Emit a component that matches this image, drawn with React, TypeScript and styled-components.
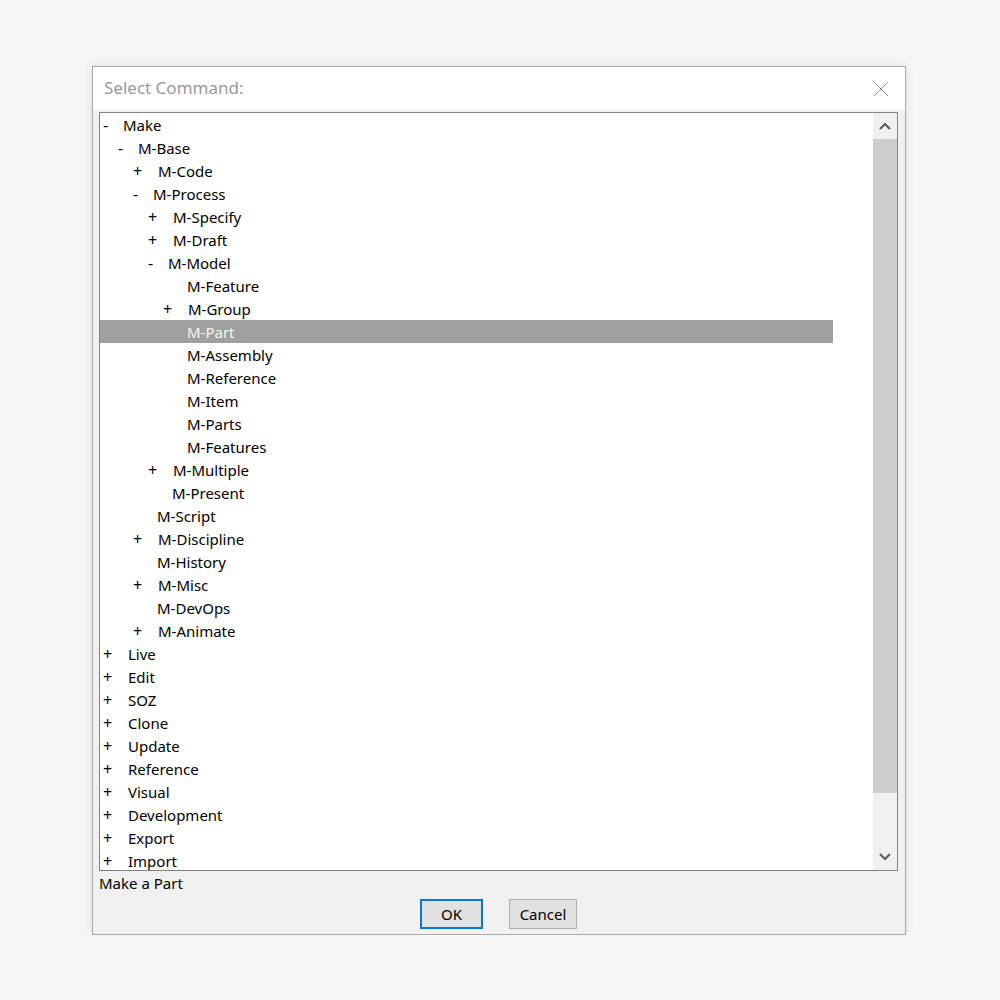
import React from "react";
import styled, { createGlobalStyle } from "styled-components";

const GlobalStyle = createGlobalStyle`
  body {
    margin: 0;
    background: #f7f7f7;
    font-family: "Noto Sans", "Liberation Sans", sans-serif;
  }
`;

const Dialog = styled.div`
  margin: 66px 0 0 92px;
  width: 814px;
  height: 869px;
  box-sizing: border-box;
  border: 1px solid #a9a9a9;
  background: #f0f0f0;
  box-shadow: 0 0 10px rgba(0, 0, 0, 0.12);
  display: flex;
  flex-direction: column;
`;

const TitleBar = styled.div`
  height: 43px;
  background: #ffffff;
  display: flex;
  align-items: center;
  justify-content: space-between;
  padding: 0 16px 0 11px;
`;

const Title = styled.span`
  font-size: 17px;
  color: #999999;
  margin-top: -2px;
`;

const Body = styled.div`
  flex: 1;
  display: flex;
  flex-direction: column;
  padding: 2px 7px 5px 6px;
`;

const TreeBox = styled.div`
  height: 759px;
  box-sizing: border-box;
  border: 1px solid #828282;
  background: #ffffff;
  display: flex;
  overflow: hidden;
`;

const List = styled.div`
  flex: 1;
  overflow: hidden;
  padding-right: 40px;
`;

const Row = styled.div<{ $selected?: boolean; $level: number }>`
  height: 23px;
  line-height: 24px;
  font-size: 15px;
  white-space: nowrap;
  display: flex;
  padding-left: ${(p) => 3 + p.$level * 15}px;
  background: ${(p) => (p.$selected ? "#a0a0a0" : "transparent")};
  color: ${(p) => (p.$selected ? "#f4f4f4" : "#000000")};
`;

const Marker = styled.span<{ $kind: string }>`
  display: inline-block;
  font-size: 16px;
  width: ${(p) => (p.$kind === "-" ? 20 : p.$kind === "+" ? 25 : 24)}px;
  box-sizing: border-box;
`;

const ScrollBar = styled.div`
  width: 24px;
  background: #f0f0f0;
  display: flex;
  flex-direction: column;
`;

const ArrowButton = styled.div`
  height: 26px;
  display: flex;
  align-items: center;
  justify-content: center;
`;

const Track = styled.div`
  flex: 1;
  display: flex;
  flex-direction: column;
`;

const Thumb = styled.div`
  height: 654px;
  background: #cdcdcd;
`;

const Status = styled.div`
  font-size: 15px;
  line-height: 24px;
  color: #000;
`;

const Buttons = styled.div`
  display: flex;
  justify-content: center;
  gap: 26px;
  margin-top: 4px;
`;

const Button = styled.button<{ $primary?: boolean; $w: number }>`
  width: ${(p) => p.$w}px;
  height: 30px;
  box-sizing: border-box;
  background: #e1e1e1;
  border: ${(p) => (p.$primary ? "2px solid #0078d7" : "1px solid #adadad")};
  font-family: "Noto Sans", "Liberation Sans", sans-serif;
  font-size: 15px;
  color: #000;
  padding: 0;
`;

type Node = [number, string, string];

const nodes: Node[] = [
  [0, "-", "Make"],
  [1, "-", "M-Base"],
  [2, "+", "M-Code"],
  [2, "-", "M-Process"],
  [3, "+", "M-Specify"],
  [3, "+", "M-Draft"],
  [3, "-", "M-Model"],
  [4, "", "M-Feature"],
  [4, "+", "M-Group"],
  [4, "", "M-Part"],
  [4, "", "M-Assembly"],
  [4, "", "M-Reference"],
  [4, "", "M-Item"],
  [4, "", "M-Parts"],
  [4, "", "M-Features"],
  [3, "+", "M-Multiple"],
  [3, "", "M-Present"],
  [2, "", "M-Script"],
  [2, "+", "M-Discipline"],
  [2, "", "M-History"],
  [2, "+", "M-Misc"],
  [2, "", "M-DevOps"],
  [2, "+", "M-Animate"],
  [0, "+", "Live"],
  [0, "+", "Edit"],
  [0, "+", "SOZ"],
  [0, "+", "Clone"],
  [0, "+", "Update"],
  [0, "+", "Reference"],
  [0, "+", "Visual"],
  [0, "+", "Development"],
  [0, "+", "Export"],
  [0, "+", "Import"],
];

const Chevron = ({ up }: { up?: boolean }) => (
  <svg width="12" height="8" viewBox="0 0 12 8">
    <path
      d={up ? "M1 7 L6 2 L11 7" : "M1 1 L6 6 L11 1"}
      fill="none"
      stroke="#606060"
      strokeWidth="2.2"
    />
  </svg>
);

const App = () => {
  return (
    <>
      <GlobalStyle />
      <Dialog>
        <TitleBar>
          <Title>Select Command:</Title>
          <svg width="16" height="16" viewBox="0 0 16 16">
            <path d="M1 1 L15 15 M15 1 L1 15" stroke="#8a8a8a" strokeWidth="1" />
          </svg>
        </TitleBar>
        <Body>
          <TreeBox>
            <List>
              {nodes.map(([level, kind, label]) => (
                <Row key={label} $level={level} $selected={label === "M-Part"}>
                  <Marker $kind={kind}>{kind}</Marker>
                  {label}
                </Row>
              ))}
            </List>
            <ScrollBar>
              <ArrowButton>
                <Chevron up />
              </ArrowButton>
              <Track>
                <Thumb />
              </Track>
              <ArrowButton>
                <Chevron />
              </ArrowButton>
            </ScrollBar>
          </TreeBox>
          <Status>Make a Part</Status>
          <Buttons>
            <Button $primary $w={63}>OK</Button>
            <Button $w={68}>Cancel</Button>
          </Buttons>
        </Body>
      </Dialog>
    </>
  );
};

export default App;
